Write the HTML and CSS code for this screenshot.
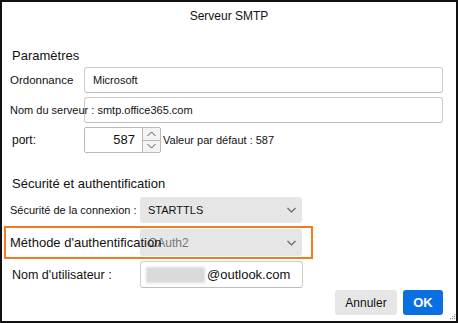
FILE: index.html
```html
<!DOCTYPE html>
<html lang="fr">
<head>
    <meta charset="UTF-8">
    <title>Serveur SMTP</title>
    <link rel="stylesheet" href="styles.css">
</head>
<body>
<div class="dialog">
    <div class="dialog-title">Serveur SMTP</div>

    <div class="section">Paramètres</div>
    <div class="row row-wide">
        <span class="label">Ordonnance</span>
        <div class="field">Microsoft</div>
    </div>
    <div class="row row-wide">
        <div class="field"></div>
        <span class="label label-over label-small">Nom du serveur : smtp.office365.com</span>
    </div>
    <div class="row row-wide">
        <span class="label label-port">port:</span>
        <div class="port">
            <div class="spin">
                <span class="spin-value">587</span>
                <div class="spin-buttons">
                    <span class="spin-btn">
                        <svg width="9" height="6" viewBox="0 0 9 6"><path d="M0.5 5 L4.5 1 L8.5 5" fill="none" stroke="#555" stroke-width="1"/></svg>
                    </span>
                    <span class="spin-btn">
                        <svg width="9" height="6" viewBox="0 0 9 6"><path d="M0.5 1 L4.5 5 L8.5 1" fill="none" stroke="#555" stroke-width="1"/></svg>
                    </span>
                </div>
            </div>
            <span class="hint">Valeur par défaut : 587</span>
        </div>
    </div>

    <div class="section section-second">Sécurité et authentification</div>
    <div class="row row-narrow">
        <span class="label label-small">Sécurité de la connexion :</span>
        <div class="select">
            <span>STARTTLS</span>
            <svg class="chevron" width="9" height="6" viewBox="0 0 9 6"><path d="M0.5 1 L4.5 5 L8.5 1" fill="none" stroke="#666" stroke-width="1.2"/></svg>
        </div>
    </div>
    <div class="highlight">
        <div class="row row-narrow">
            <div class="select select-muted">
                <span>OAuth2</span>
                <svg class="chevron" width="9" height="6" viewBox="0 0 9 6"><path d="M0.5 1 L4.5 5 L8.5 1" fill="none" stroke="#666" stroke-width="1.2"/></svg>
            </div>
            <span class="label label-over label-big">Méthode d'authentification</span>
        </div>
    </div>
    <div class="row row-narrow row-user">
        <span class="label label-user">Nom d'utilisateur :</span>
        <div class="field field-user"><span class="blurred"></span>@outlook.com</div>
    </div>

    <div class="actions">
        <button class="btn btn-cancel">Annuler</button>
        <button class="btn btn-ok">OK</button>
    </div>

    <svg class="grip" width="8" height="8" viewBox="0 0 8 8">
        <rect x="6" y="1" width="1.2" height="1.2" fill="#999"/>
        <rect x="4" y="3" width="1.2" height="1.2" fill="#999"/>
        <rect x="6" y="3" width="1.2" height="1.2" fill="#999"/>
        <rect x="2" y="5" width="1.2" height="1.2" fill="#999"/>
        <rect x="4" y="5" width="1.2" height="1.2" fill="#999"/>
        <rect x="6" y="5" width="1.2" height="1.2" fill="#999"/>
    </svg>
</div>
</body>
</html>
```

FILE: styles.css
```css
html, body {
    margin: 0;
    padding: 0;
}
body {
    font-family: "Liberation Sans", Arial, sans-serif;
    color: #111;
    background: #fff;
}
.dialog {
    position: relative;
    box-sizing: border-box;
    width: 458px;
    height: 323px;
    border: 2px solid #111;
    padding: 0 13px 0 8px;
    background: #fff;
}
.dialog-title {
    height: 28px;
    line-height: 28px;
    text-align: center;
    font-size: 12px;
    margin-left: -8px;
    margin-right: -13px;
}
.section {
    margin-top: 16px;
    margin-bottom: 1px;
    padding-left: 2px;
    line-height: 20px;
    font-size: 13px;
}
.section-second {
    margin-top: 21px;
    margin-bottom: 3px;
}
.row {
    display: grid;
    align-items: center;
    margin-bottom: 4px;
}
.row-wide {
    grid-template-columns: 74px 359px;
}
.row-narrow {
    grid-template-columns: 130px 162px;
    margin-bottom: 3px;
}
.label {
    font-size: 11.5px;
    white-space: nowrap;
}
.label-small {
    font-size: 11px;
}
.label-big {
    font-size: 13px;
}
.label-port {
    padding-left: 2px;
    font-size: 12px;
}
.label-user {
    padding-left: 2px;
    font-size: 12.5px;
}
.label-over {
    grid-column: 1 / 3;
    grid-row: 1;
    z-index: 1;
}
.row > .field,
.row > .select {
    grid-column: 2;
    grid-row: 1;
}
.field {
    box-sizing: border-box;
    height: 26px;
    border: 1px solid #cdcdcd;
    border-bottom-color: #bdbdbd;
    border-radius: 3px;
    padding: 0 8px;
    line-height: 24px;
    font-size: 11px;
    background: #fff;
}
.port {
    display: flex;
    align-items: center;
}
.spin {
    display: flex;
    box-sizing: border-box;
    width: 77px;
    height: 26px;
    border: 1px solid #b8b8b8;
    border-radius: 2px;
}
.spin-value {
    flex: 1;
    text-align: right;
    padding-right: 7px;
    line-height: 24px;
    font-size: 13px;
}
.spin-buttons {
    display: flex;
    flex-direction: column;
    width: 17px;
    border-left: 1px solid #b8b8b8;
}
.spin-btn {
    flex: 1;
    display: flex;
    align-items: center;
    justify-content: center;
    background: #f3f3f3;
}
.spin-btn + .spin-btn {
    border-top: 1px solid #b8b8b8;
}
.hint {
    margin-left: 2px;
    font-size: 11px;
}
.select {
    box-sizing: border-box;
    height: 26px;
    display: flex;
    align-items: center;
    justify-content: space-between;
    padding: 0 4px 0 8px;
    background: #e6e6e6;
    border-radius: 3px;
    font-size: 11px;
}
.select-muted {
    height: 27px;
    color: #777;
    font-size: 12px;
}
.chevron {
    margin-right: 2px;
}
.highlight {
    box-sizing: border-box;
    width: 309px;
    margin-left: -6px;
    margin-bottom: 2px;
    border: 2px solid #f47b20;
    padding: 1px 0 1px 4px;
}
.highlight .row {
    margin-bottom: 0;
}
.row-user {
    margin-bottom: 2px;
}
.field-user {
    height: 27px;
    width: 163px;
    display: flex;
    align-items: center;
    padding: 0 5px;
    font-size: 13px;
}
.blurred {
    width: 59px;
    height: 16px;
    margin-right: 2px;
    background: #dadada;
    filter: blur(1.2px);
}
.actions {
    display: flex;
    justify-content: flex-end;
    gap: 6px;
}
.btn {
    height: 25px;
    border: none;
    border-radius: 3px;
    font-family: "Liberation Sans", Arial, sans-serif;
    font-size: 12px;
    padding: 0;
}
.btn-cancel {
    width: 62px;
    background: #e6e6e6;
    color: #111;
}
.btn-ok {
    width: 40px;
    background: #0a6fe0;
    color: #fff;
    font-weight: bold;
    font-size: 13px;
}
.grip {
    position: absolute;
    right: 0;
    bottom: 0;
}
```
